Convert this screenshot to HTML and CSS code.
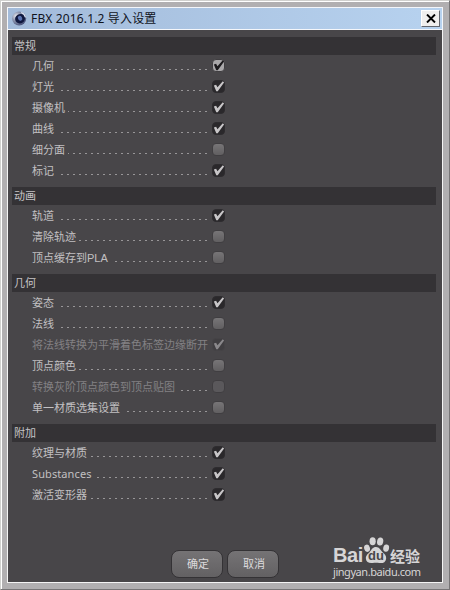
FILE: index.html
```html
<!DOCTYPE html>
<html lang="zh-CN">
<head>
    <meta charset="utf-8">
    <title>FBX 2016.1.2 导入设置</title>
    <link rel="stylesheet" href="styles.css">
</head>
<body>
    <!-- SHARED SHAPES -->
    <svg class="shapes">
        <symbol id="tick" viewBox="0 0 14 14">
            <path d="M2 5.8 L4.4 5 L5.9 7.8 L11.6 1.4 L13 2.6 L6.2 12 L4.6 12 Z" fill="currentColor"/>
        </symbol>
    </svg>
    <div class="window">
        <header class="titlebar">
            <svg class="app-icon" viewBox="0 0 16 16">
                <defs>
                    <radialGradient id="ball" cx="30%" cy="35%" r="80%">
                        <stop offset="0" stop-color="#eef0f6"/>
                        <stop offset="0.4" stop-color="#8c94ae"/>
                        <stop offset="1" stop-color="#3c4670"/>
                    </radialGradient>
                </defs>
                <circle cx="7.6" cy="7.9" r="7.5" fill="url(#ball)"/>
                <ellipse cx="8.6" cy="8.2" rx="5.4" ry="5" fill="#10183f" transform="rotate(-30 8.6 8.2)"/>
                <ellipse cx="8.6" cy="7.8" rx="2.2" ry="2.7" fill="#5a72b0" transform="rotate(-30 8.6 7.8)"/>
                <path d="M9.8 1.6 Q13.6 3 14.4 6.8" fill="none" stroke="#dfe6f4" stroke-width="1.2"/>
            </svg>
            <h1 class="title">FBX 2016.1.2 导入设置</h1>
            <button class="close">
                <svg viewBox="0 0 10 9"><path d="M1 0.5 L9 8.5 M9 0.5 L1 8.5" stroke="#000" stroke-width="1.9"/></svg>
            </button>
        </header>
        <main class="content">
            <section class="group">
                <h2>常规</h2>
                <div class="row"><label>几何</label><i class="dots"></i><span class="box hot"><svg><use href="#tick"/></svg></span></div>
                <div class="row"><label>灯光</label><i class="dots"></i><span class="box on"><svg><use href="#tick"/></svg></span></div>
                <div class="row"><label>摄像机</label><i class="dots"></i><span class="box on"><svg><use href="#tick"/></svg></span></div>
                <div class="row"><label>曲线</label><i class="dots"></i><span class="box on"><svg><use href="#tick"/></svg></span></div>
                <div class="row"><label>细分面</label><i class="dots"></i><span class="box"></span></div>
                <div class="row"><label>标记</label><i class="dots"></i><span class="box on"><svg><use href="#tick"/></svg></span></div>
            </section>
            <section class="group">
                <h2>动画</h2>
                <div class="row"><label>轨道</label><i class="dots"></i><span class="box on"><svg><use href="#tick"/></svg></span></div>
                <div class="row"><label>清除轨迹</label><i class="dots"></i><span class="box"></span></div>
                <div class="row"><label>顶点缓存到PLA</label><i class="dots"></i><span class="box"></span></div>
            </section>
            <section class="group">
                <h2>几何</h2>
                <div class="row"><label>姿态</label><i class="dots"></i><span class="box on"><svg><use href="#tick"/></svg></span></div>
                <div class="row"><label>法线</label><i class="dots"></i><span class="box"></span></div>
                <div class="row disabled full"><label>将法线转换为平滑着色标签边缘断开</label><span class="box on"><svg><use href="#tick"/></svg></span></div>
                <div class="row"><label>顶点颜色</label><i class="dots"></i><span class="box"></span></div>
                <div class="row disabled"><label>转换灰阶顶点颜色到顶点贴图</label><i class="dots"></i><span class="box"></span></div>
                <div class="row"><label>单一材质选集设置</label><i class="dots"></i><span class="box"></span></div>
            </section>
            <section class="group">
                <h2>附加</h2>
                <div class="row"><label>纹理与材质</label><i class="dots"></i><span class="box on"><svg><use href="#tick"/></svg></span></div>
                <div class="row"><label class="latin">Substances</label><i class="dots"></i><span class="box on"><svg><use href="#tick"/></svg></span></div>
                <div class="row"><label>激活变形器</label><i class="dots"></i><span class="box on"><svg><use href="#tick"/></svg></span></div>
            </section>
            <footer class="buttons">
                <button class="btn">确定</button>
                <button class="btn">取消</button>
            </footer>
        </main>
    </div>
    <!-- WATERMARK -->
    <div class="watermark">
        <div class="brand">
            <span class="bai">Bai</span>
            <span class="paw">
                <svg viewBox="0 0 28 28">
                    <g fill="#d6d5d6">
                        <ellipse cx="4.2" cy="12.2" rx="3" ry="3.8" transform="rotate(-15 4.2 12.2)"/>
                        <ellipse cx="10" cy="5" rx="3.2" ry="4.2"/>
                        <ellipse cx="17.8" cy="5.2" rx="3.2" ry="4.2" transform="rotate(10 17.8 5.2)"/>
                        <ellipse cx="24" cy="12" rx="3" ry="3.8" transform="rotate(12 24 12)"/>
                        <path d="M13.5 11 C17 11 18 14 20 16 C22.5 18.3 24.4 20 24 23 C23.5 27 20 28 17 27.4 C14.5 27 12.5 27 10 27.4 C6.5 28 3.3 26.6 3 23 C2.8 19.5 5.2 18 7 16 C9 13.8 10 11 13.5 11 Z"/>
                    </g>
                </svg>
                <b>du</b>
            </span>
            <span class="jingyan">经验</span>
        </div>
        <div class="url">jingyan.baidu.com</div>
    </div>
</body>
</html>
```

FILE: styles.css
```css
* {
    box-sizing: border-box;
}
body {
    margin: 0;
    width: 450px;
    height: 590px;
    overflow: hidden;
    font-family: "Liberation Sans", "Noto Sans CJK SC", sans-serif;
}
h1, h2 {
    margin: 0;
    font-weight: normal;
}
.shapes {
    display: none;
}
/* WINDOW FRAME */
.window {
    width: 450px;
    height: 590px;
    padding: 5px;
    display: flex;
    flex-direction: column;
    background: #b1afb1;
    border: 1px solid #777577;
    border-top-color: #d0d0ce;
    border-left-color: #d0d0ce;
    box-shadow: inset 1px 1px 0 #fff;
}
.titlebar {
    display: flex;
    align-items: center;
    flex: none;
    height: 23px;
    margin: 1px 1px 0;
    padding: 0 2px 0 4px;
    background: linear-gradient(to right, #a3bbda, #b7d2ef);
    border: 1px solid #f4f6fa;
}
.app-icon {
    width: 15px;
    height: 15px;
}
.title {
    flex: 1;
    margin-left: 4px;
    font: 12px/20px "Noto Sans", "Noto Sans CJK SC", sans-serif;
    letter-spacing: 0.15px;
    color: #10131c;
}
.close {
    display: flex;
    align-items: center;
    justify-content: center;
    width: 19px;
    height: 17px;
    padding: 0;
    background: #f0efee;
    border: 1px solid #fff;
    border-right-color: #62666e;
    border-bottom-color: #62666e;
}
.close svg {
    width: 10px;
    height: 9px;
}
/* CONTENT */
.content {
    flex: 1;
    display: flex;
    flex-direction: column;
    margin: 0 1px 1px;
    padding: 7px 6px 4px 4px;
    background: #484649;
    border: 1px solid #f4f4f4;
    border-top: none;
}
.group {
    margin-bottom: 6px;
}
.group h2 {
    height: 18px;
    padding-left: 2px;
    background: #343235;
    color: #c6c4c6;
    font-size: 11px;
    line-height: 19px;
}
.row {
    display: flex;
    align-items: center;
    width: 213px;
    height: 21px;
    padding-left: 20px;
    color: #c2c0c2;
    font-size: 11px;
    line-height: 21px;
    white-space: nowrap;
}
.row label {
    padding-top: 1px;
}
.row .latin {
    padding-top: 0;
    line-height: 20px;
    font-family: "Noto Sans", sans-serif;
    letter-spacing: 0.1px;
}
.full {
    justify-content: space-between;
}
.dots {
    flex: 1;
    height: 1px;
    margin: 8px 5px 0 3px;
    background: repeating-linear-gradient(to left, #989698 0 2px, transparent 2px 6px);
}
.box {
    flex: none;
    width: 13px;
    height: 13px;
    border-radius: 4px;
    background: linear-gradient(#777577, #615f61);
    border: 1px solid #403e41;
}
.box svg {
    display: block;
    width: 13px;
    height: 13px;
    margin: -1px;
}
.box.on {
    background: #2a282b;
    border-color: #2e2c2f;
    color: #c8c6c8;
}
.box.hot {
    background: #a9a7a9;
    color: #1c1a1d;
}
.disabled label {
    color: #838184;
}
.disabled .box {
    background: #5a585b;
}
.disabled .box.on {
    background: #403e41;
    border-color: #454346;
    color: #8a888b;
}
.buttons {
    display: flex;
    gap: 4px;
    margin-top: auto;
    padding-left: 159px;
}
.btn {
    width: 52px;
    height: 28px;
    padding: 0 0 2px 2px;
    border: 1px solid #343235;
    border-radius: 8px;
    background: linear-gradient(#757375, #636163);
    color: #dcdadc;
    font: 11px "Noto Sans CJK SC", sans-serif;
}
/* WATERMARK */
.watermark {
    position: absolute;
    left: 333px;
    top: 536px;
    color: #d6d5d6;
}
.brand {
    display: flex;
    align-items: flex-end;
    height: 28px;
}
.bai {
    width: 30px;
    font: bold 20px/18px "Liberation Sans", sans-serif;
    letter-spacing: -0.4px;
}
.paw {
    position: relative;
    width: 27px;
    height: 28px;
}
.paw svg {
    width: 27px;
    height: 28px;
}
.paw b {
    position: absolute;
    left: 5px;
    top: 13px;
    font: bold 13px/14px "Liberation Sans", sans-serif;
    color: #484649;
}
.jingyan {
    font: bold 15px/17px "Noto Sans CJK SC", sans-serif;
}
.url {
    font: 11px/16px "Noto Sans", sans-serif;
    letter-spacing: -0.45px;
}
```
